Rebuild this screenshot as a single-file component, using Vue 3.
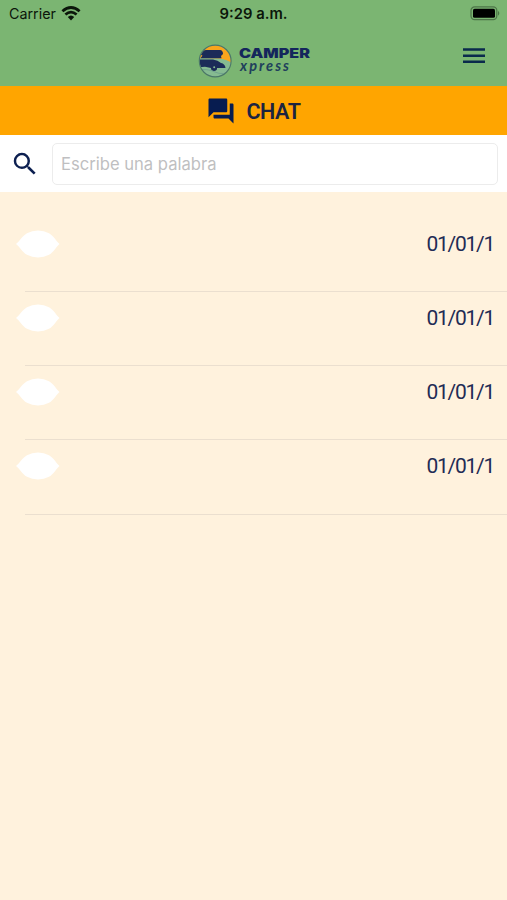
<script setup>
import { ref } from 'vue';

const search = ref('');
const chats = ref([
  { id: 1, date: '01/01/1' },
  { id: 2, date: '01/01/1' },
  { id: 3, date: '01/01/1' },
  { id: 4, date: '01/01/1' },
]);
</script>

<template>
  <div class="page">
    <header class="header">
      <div class="status">
        <div class="status__side">
          <span class="carrier">Carrier</span>
          <svg class="wifi" width="20" height="15" viewBox="0 0 20 15">
            <path d="M1.4 5.2Q10-2.2 18.6 5.2M4.4 8.5Q10 3.8 15.6 8.5" />
            <path class="wifi__dot" d="M6.8 11Q10 8 13.2 11L10 14.4Z" />
          </svg>
        </div>
        <span class="time">9:29 a.m.</span>
        <div class="status__side status__side--right">
          <svg width="31" height="15" viewBox="0 0 31 15">
            <rect class="battery__case" x="1" y="0.9" width="25.8" height="12.8" rx="3.6" />
            <rect x="3" y="2.8" width="22" height="9" rx="1.6" />
            <path class="battery__tip" d="M28 4.8Q30.6 7.3 28 9.8Z" />
          </svg>
        </div>
      </div>
      <div class="nav">
        <svg class="logo" width="120" height="38" viewBox="0 0 120 38">
          <clipPath id="badge"><circle cx="18.2" cy="19" r="15.7" /></clipPath>
          <g clip-path="url(#badge)">
            <rect width="36" height="38" fill="#86bb91" />
            <path d="M0 0H36V22Q30 17.500 24 17L0 16Z" fill="#f9a51d" />
            <path d="M0 16.500H22Q29 17 35 22V25H0Z" fill="#86bb91" />
            <path
              d="M5 9.500Q6 8 9 8H23Q26 8.300 26 12L24 14L24.500 16.300H3.500L5.500 13.500L2.500 12.500Z"
              fill="#1b2b58"
            />
            <path
              d="M0 17.400L16 17.400Q21 18 24 21Q28 21.800 28.500 26H20A3 3 0 0 1 14 26L8 24.800L0 25.500Z"
              fill="#1b2b58"
            />
            <circle cx="17.2" cy="25.2" r="3" fill="#1b2b58" />
            <circle cx="17.2" cy="25.2" r="1" fill="#86bb91" />
            <path d="M0 28.500Q10 26 18 30T36 28" fill="none" stroke="#6d9f8c" stroke-width="0.9" />
          </g>
          <circle cx="18.2" cy="19" r="15.9" fill="none" stroke="#4b7769" stroke-width="1.1" />
          <text class="logo__camper" x="42" y="15.5" textLength="71" lengthAdjust="spacingAndGlyphs">CAMPER</text>
          <text class="logo__xpress" x="43" y="28.6" textLength="49" lengthAdjust="spacing">xpress</text>
        </svg>
        <button class="menu" aria-label="Menu">
          <svg width="22" height="17" viewBox="0 0 22 17">
            <path d="M0 2.5H22M0 8.7H22M0 14.7H22" />
          </svg>
        </button>
      </div>
    </header>

    <div class="title">
      <svg width="30" height="30" viewBox="0 0 24 24">
        <path
          d="M21 6h-2v9H6v2c0 .55.45 1 1 1h11l4 4V7c0-.55-.45-1-1-1zm-4 6V3c0-.55-.45-1-1-1H3c-.55 0-1 .45-1 1v14l4-4h10c.55 0 1-.45 1-1z"
        />
      </svg>
      <h1>CHAT</h1>
    </div>

    <div class="search">
      <svg width="30" height="30" viewBox="0 0 24 24">
        <path
          d="M15.5 14h-.79l-.28-.27A6.47 6.47 0 0 0 16 9.5 6.5 6.5 0 1 0 9.5 16c1.61 0 3.09-.59 4.23-1.57l.27.28v.79l5 4.99L20.49 19l-4.99-5zm-6 0C7.01 14 5 11.99 5 9.5S7.01 5 9.5 5 14 7.01 14 9.5 11.99 14 9.5 14z"
        />
      </svg>
      <input v-model="search" type="text" placeholder="Escribe una palabra" />
    </div>

    <ul class="chats">
      <li v-for="chat in chats" :key="chat.id" class="chat">
        <svg width="44" height="28" viewBox="0 0 44 28">
          <path
            d="M0 14C4 11 6 6 11 3.2Q16 .6 22 .6T33 3.2C38 6 40 11 43.5 14C40 17 38 22 33 24.8Q28 27.4 22 27.4T11 24.8C6 22 4 17 0 14Z"
            fill="#fff"
          />
        </svg>
        <span class="date">{{ chat.date }}</span>
      </li>
    </ul>
  </div>
</template>

<style>
body {
  background: #fff2dd;
}
</style>

<style scoped>
.page {
  min-height: 900px;
  background: #fff2dd;
  font-family: Inter, sans-serif;
  color: #0c1f50;
}

.header {
  height: 86px;
  background: #7bb572;
}

.status {
  display: flex;
  align-items: center;
  height: 27px;
  padding: 0 6px 0 9px;
  color: #0b160a;
}

.status__side {
  display: flex;
  flex: 1;
  align-items: center;
  gap: 5px;
}

.status__side--right {
  justify-content: flex-end;
}

.carrier {
  font-size: 14.3px;
}

.wifi {
  margin-top: -1px;
  fill: none;
  stroke: #0b160a;
  stroke-width: 2.8;
}

.wifi__dot {
  fill: #0b160a;
  stroke: none;
}

.time {
  margin-right: 3px;
  font-size: 14.8px;
  font-weight: 600;
}

.battery__case {
  fill: none;
  stroke: #4d7548;
  stroke-width: 1.2;
}

.battery__tip {
  fill: #4d7548;
}

.nav {
  display: flex;
  align-items: center;
  justify-content: space-between;
  height: 59px;
  padding: 0 22px 0 197px;
}

.logo {
  margin-top: 8px;
}

.logo__camper {
  font-size: 12.5px;
  font-weight: 900;
  fill: #14265c;
}

.logo__xpress {
  font-family: Lato, sans-serif;
  font-size: 14.5px;
  font-style: italic;
  font-weight: 700;
  fill: #1f405c;
}

.menu {
  display: flex;
  padding: 0;
  margin-top: -3px;
  border: none;
  background: none;
}

.menu path {
  stroke: #0a2a4c;
  stroke-width: 2.6;
}

.title {
  display: flex;
  align-items: center;
  justify-content: center;
  gap: 10px;
  height: 49px;
  background: #ffa500;
}

.title svg {
  fill: #071c50;
}

.title h1 {
  margin: 1px 0 0;
  font-family: Roboto, sans-serif;
  font-size: 21.5px;
  font-weight: 600;
  letter-spacing: -0.4px;
  color: #1c2440;
}

.search {
  display: flex;
  align-items: center;
  gap: 12px;
  box-sizing: border-box;
  height: 57px;
  padding: 0 9px 0 10px;
  background: #fff;
}

.search svg {
  flex: none;
  fill: #0c1f50;
}

.search input {
  flex: 1;
  box-sizing: border-box;
  min-width: 0;
  height: 42px;
  padding: 0 8px;
  border: 1px solid #ececec;
  border-radius: 5px;
  background: #fff;
  font-family: Inter, sans-serif;
  font-size: 16.6px;
  color: #0c1f50;
}

.search input::placeholder {
  color: #bfbfc1;
}

.chats {
  margin: 0;
  padding: 26.2px 0 0;
  list-style: none;
}

.chat {
  display: flex;
  align-items: flex-start;
  justify-content: space-between;
  box-sizing: border-box;
  height: 74.1px;
  padding: 12px 13px 0 16px;
  background: linear-gradient(#ebdfcf, #ebdfcf) 25px 100% / 100% 1px no-repeat;
}

.date {
  font-family: Roboto, sans-serif;
  font-size: 21px;
  line-height: 28px;
  letter-spacing: -1.25px;
  color: #1f2c55;
}
</style>
